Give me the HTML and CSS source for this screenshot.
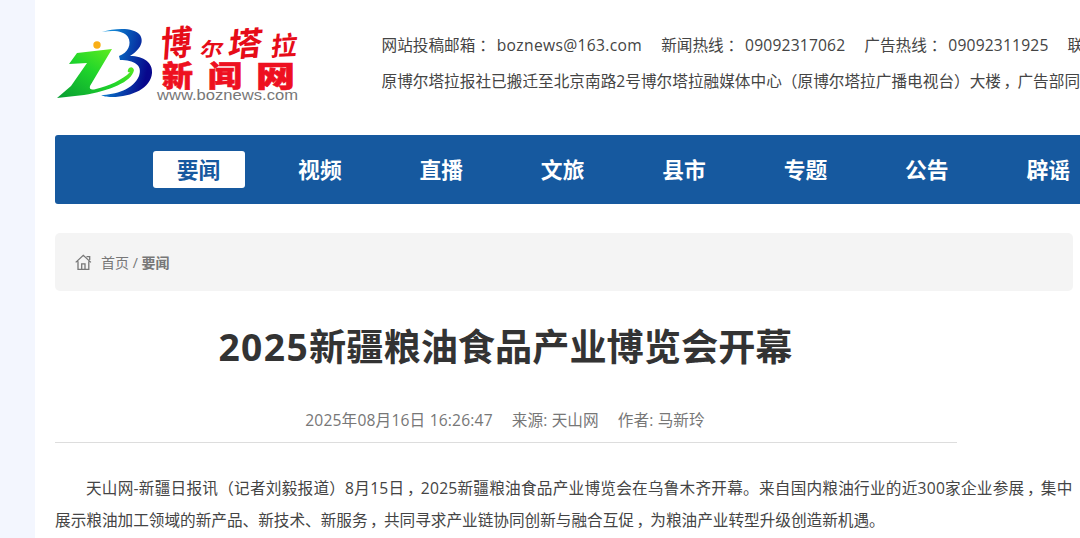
FILE: index.html
```html
<!DOCTYPE html>
<html lang="zh-CN">
<head>
    <meta charset="UTF-8">
    <title>2025新疆粮油食品产业博览会开幕</title>
    <meta name="viewport" content="width=device-width, initial-scale=1">
    <link rel="stylesheet" href="styles.css">
</head>
<body>
    <div class="page">
        <header class="header">
            <svg class="logo" width="260" height="95" viewBox="0 0 260 95">
                <defs>
                    <linearGradient id="blue" x1="0" y1="0" x2="1" y2="0.3">
                        <stop offset="0" stop-color="#1ba5e8"/>
                        <stop offset="0.5" stop-color="#0758b8"/>
                        <stop offset="1" stop-color="#08078c"/>
                    </linearGradient>
                    <linearGradient id="green" x1="0" y1="1" x2="1" y2="0">
                        <stop offset="0" stop-color="#079c32"/>
                        <stop offset="0.5" stop-color="#20d52b"/>
                        <stop offset="1" stop-color="#78f51b"/>
                    </linearGradient>
                </defs>
                <path fill="url(#blue)" d="M52 17C65 13 84 12 90 20C95 28 88 36 80 41C94 41 103 48 102 58C101 73 82 82 62 82C56 82 53 81 51 80C65 80 84 74 89 61C93 50 84 45 70 45L69 41C78 38 82 29 78 22C74 16 64 15 52 17Z"/>
                <path fill="url(#green)" d="M62 34L40 71C39 75 42 75 46 74C58 71 73 65 80 57Q76 58 79 53Q83 51 84 55C82 67 59 76 34 80L7 83L21 71L37 48L19 49L27 38Z"/>
                <circle cx="47" cy="30" r="3.7" fill="#f9af16"/>
                <g class="logo-script">
                    <text transform="translate(110 42) skewX(-9) rotate(-5)" font-size="35" textLength="31" lengthAdjust="spacingAndGlyphs">博</text>
                    <text transform="translate(149 41) skewX(-12)" font-size="19" textLength="23" lengthAdjust="spacingAndGlyphs">尔</text>
                    <text transform="translate(177 42) skewX(-10) rotate(-4)" font-size="33" textLength="34" lengthAdjust="spacingAndGlyphs">塔</text>
                    <text transform="translate(220 41) skewX(-10) rotate(-3)" font-size="26">拉</text>
                </g>
                <g class="logo-name">
                    <text x="112" y="72" textLength="31" lengthAdjust="spacingAndGlyphs">新</text>
                    <text x="158" y="72" textLength="34" lengthAdjust="spacingAndGlyphs">闻</text>
                    <text x="206" y="72" textLength="39" lengthAdjust="spacingAndGlyphs">网</text>
                </g>
                <text class="logo-url" x="107" y="84.5" textLength="141" lengthAdjust="spacingAndGlyphs">www.boznews.com</text>
            </svg>
            <div class="contact">
                <p>
                    <span>网站投稿邮箱<i class="colon">：</i> <em class="mail">boznews@163.com</em></span>
                    <span>新闻热线<i class="colon">：</i> <em>09092317062</em></span>
                    <span>广告热线<i class="colon">：</i> <em>09092311925</em></span>
                    <span>联</span>
                </p>
                <p class="address">原博尔塔拉报社已搬迁至北京南路2号博尔塔拉融媒体中心（原博尔塔拉广播电视台）大楼<i>，</i>广告部同</p>
            </div>
        </header>

        <nav class="nav">
            <a class="active">要闻</a>
            <a>视频</a>
            <a>直播</a>
            <a>文旅</a>
            <a>县市</a>
            <a>专题</a>
            <a>公告</a>
            <a>辟谣</a>
        </nav>

        <div class="breadcrumb">
            <svg width="17" height="17" viewBox="0 0 17 17" fill="none" stroke="#777" stroke-width="1.3">
                <path d="M.7 8.4L8.3 1.3L15.9 8.4M3 7.2V15.3H13.8V7.2M11.5 2.6H14.7V6M6.7 15V9.8H10V15"/>
            </svg>
            <span>首页 / <b>要闻</b></span>
        </div>

        <article class="article">
            <h1><span>2025</span>新疆粮油食品产业博览会开幕</h1>
            <div class="meta">
                <span class="date">2025年08月16日 16:26:47</span>
                <span>来源: 天山网</span>
                <span>作者: 马新玲</span>
            </div>
        </article>
        <p class="content"><span>天山网-新疆日报讯（记者刘毅报道）8月15日<i>，</i>2025新疆粮油食品产业博览会在乌鲁木齐开幕。来自国内粮油行业的近300家企业参展<i>，</i>集中</span><br>展示粮油加工领域的新产品、新技术、新服务<i>，</i>共同寻求产业链协同创新与融合互促<i>，</i>为粮油产业转型升级创造新机遇。</p>
    </div>
</body>
</html>
```
FILE: styles.css
```css
* {
    box-sizing: border-box;
}
body {
    margin: 0;
    padding-left: 35px;
    height: 538px;
    overflow: hidden;
    background: #f3f6fe;
    font-family: "Open Sans", "Noto Sans CJK SC", sans-serif;
    font-size: 15.63px;
    color: #444;
}
/* full-width punctuation, moved towards the middle of its cell */
i {
    display: inline-block;
    width: 1.05em;
    text-indent: .16em;
    font-style: normal;
}
.page {
    height: 538px;
    padding-left: 20px;
    background: #fff;
    overflow: hidden;
}
.header {
    display: flex;
    height: 135px;
    padding-top: 15px;
}
.logo {
    flex-shrink: 0;
    margin-left: -5px;
}
.logo-script {
    font-family: "Noto Sans CJK SC", sans-serif;
    font-weight: bold;
    fill: #e60c18;
}
.logo-name {
    font-family: "Noto Sans CJK SC", sans-serif;
    font-size: 29px;
    font-weight: 900;
    fill: #ee1020;
    stroke: #ee1020;
    stroke-width: .6px;
}
.logo-url {
    font-family: "Liberation Sans", sans-serif;
    font-size: 14px;
    fill: #777;
}
.contact {
    padding: 12px 0 0 71.5px;
    white-space: nowrap;
}
.contact p {
    display: flex;
    gap: 19px;
    margin: 0;
    line-height: 36px;
}
.contact .address {
    display: block;
    letter-spacing: .03px;
}
.contact .colon {
    width: 17.4px;
    text-indent: .25em;
}
.contact em {
    font-style: normal;
    letter-spacing: .18px;
}
.contact .mail {
    letter-spacing: .33px;
}
.nav {
    display: flex;
    align-items: center;
    height: 69px;
    padding-left: 97.5px;
    gap: 29.4px;
    background: #16599f;
    border-radius: 3px 0 0 3px;
}
.nav a {
    flex: 0 0 92px;
    height: 37px;
    line-height: 38px;
    border-radius: 3px;
    font-size: 21.8px;
    font-weight: bold;
    text-align: center;
    color: #fff;
}
.nav .active {
    background: #fff;
    color: #16599f;
}
.breadcrumb {
    display: flex;
    align-items: center;
    gap: 9px;
    width: 1018px;
    height: 58px;
    margin-top: 29px;
    padding-left: 20px;
    border-radius: 5px;
    background: #f4f4f4;
    font-size: 14px;
    color: #777;
}
.article {
    width: 902px;
    height: 152px;
    border-bottom: 1px solid #ddd;
    text-align: center;
}
.article h1 {
    margin: 0;
    padding: 30px 1px 0 0;
    line-height: 52px;
    font-size: 37.2px;
    color: #333;
}
.article h1 span {
    letter-spacing: 1.4px;
}
.meta {
    display: flex;
    justify-content: center;
    gap: 19px;
    padding: 35px 2px 0 0;
    line-height: 24px;
    color: #777;
}
.meta span {
    letter-spacing: .1px;
}
.meta .date {
    letter-spacing: .17px;
}
.content {
    margin: 30px 0 0;
    text-indent: 31px;
    line-height: 31.5px;
    white-space: nowrap;
}
.content span {
    letter-spacing: .24px;
}
```
